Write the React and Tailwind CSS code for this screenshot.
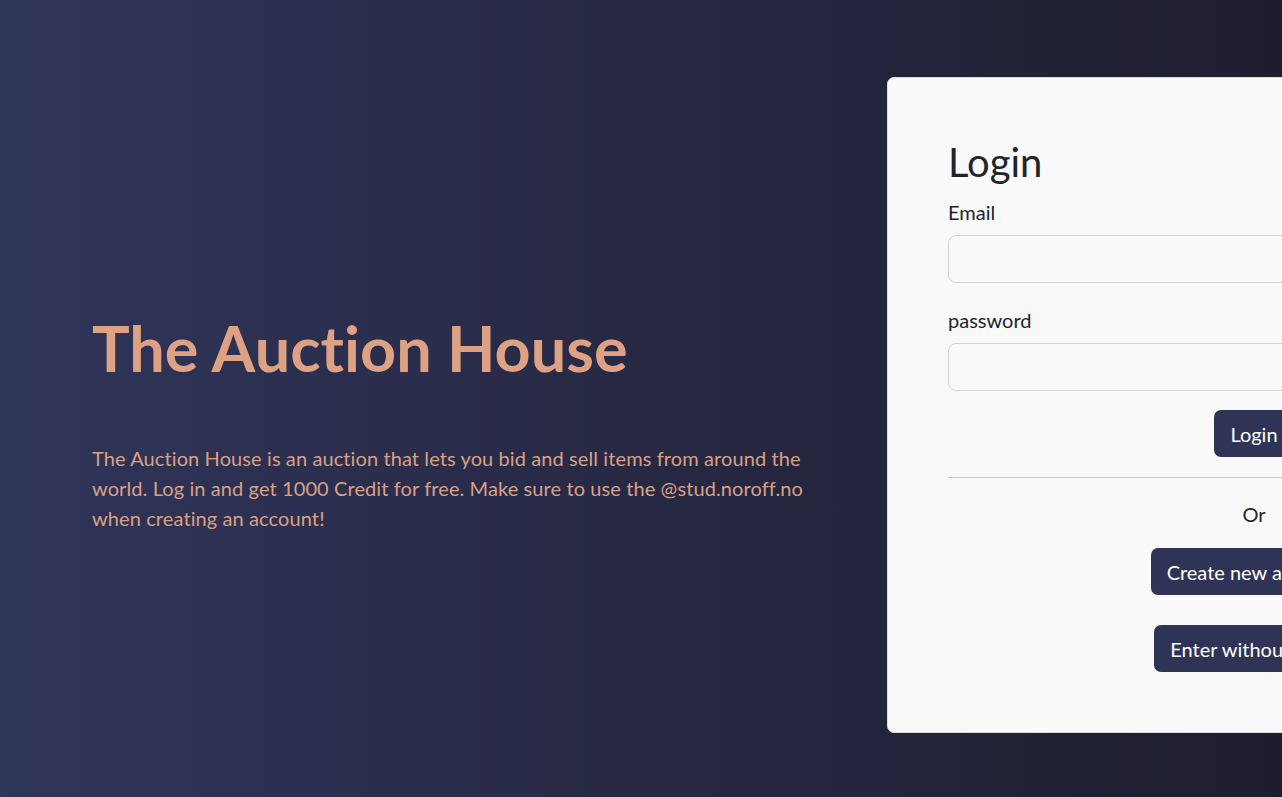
// App.jsx
// Landing / login screen for The Auction House.

import React, { useState } from 'react';

// Shared button look for the dark navy buttons
const btn =
  "h-[47px] px-4 rounded-[7px] bg-[#2f3456] text-white text-[20px] leading-[30px] hover:bg-[#262a47]";

// Label + input pair used in the login form
const Field = ({ label, type, value, onChange }) => (
  <div className="flex flex-col">
    <label className="text-[20px] leading-[30px] text-[#212529] mb-2">{label}</label>
    <input
      type={type}
      value={value}
      onChange={(e) => onChange(e.target.value)}
      className="h-[48px] w-full px-4 rounded-[8px] border border-[#d4d4d4] bg-[#f9f9f9] text-[20px] text-[#212529] focus:outline-none"
    />
  </div>
);

const App = () => {
  const [email, setEmail] = useState('');
  const [password, setPassword] = useState('');

  return (
    <div
      className="w-full min-h-[797px] h-screen overflow-hidden bg-gradient-to-r from-[#30355a] to-[#1e1d2e] font-['Segoe_UI','Lato',sans-serif] [font-variant-ligatures:none]"
    >
      <div className="flex items-start pt-[77px]">
        {/* Intro text */}
        <div className="w-[887px] shrink-0 pl-[92px] pr-[60px] pt-[234px]">
          <h1 className="text-[63px] leading-[74px] font-bold text-[#dca283]">
            The Auction House
          </h1>
          <p className="mt-[58px] text-[20px] leading-[30px] text-[#d9a086] tracking-[0.1px]">
            The Auction House is an auction that lets you bid and sell items from around the
            world. Log in and get 1000 Credit for free. Make sure to use the @stud.noroff.no
            when creating an account!
          </p>
        </div>

        {/* Login card */}
        <div className="w-[734px] shrink-0 rounded-[7px] border border-[#dcdcdc] bg-[#f9f9f9] p-[60px]">
          <h2 className="text-[40px] leading-[48px] text-[#212529] mb-[11px]">Login</h2>
          <div className="flex flex-col gap-[22px]">
            <Field label="Email" type="email" value={email} onChange={setEmail} />
            <Field label="password" type="password" value={password} onChange={setPassword} />
          </div>
          <div className="flex justify-center mt-[19px]">
            <button className={btn}>Login</button>
          </div>
          <hr className="mt-[20px] border-0 border-t border-[#c8c8c8]" />
          <p className="mt-[21px] text-center text-[20px] leading-[30px] text-[#212529]">Or</p>
          <div className="flex flex-col items-center mt-[19px] gap-[30px]">
            <button className={btn}>Create new account</button>
            <button className={btn}>Enter without login</button>
          </div>
        </div>
      </div>
    </div>
  );
};

export default App;
